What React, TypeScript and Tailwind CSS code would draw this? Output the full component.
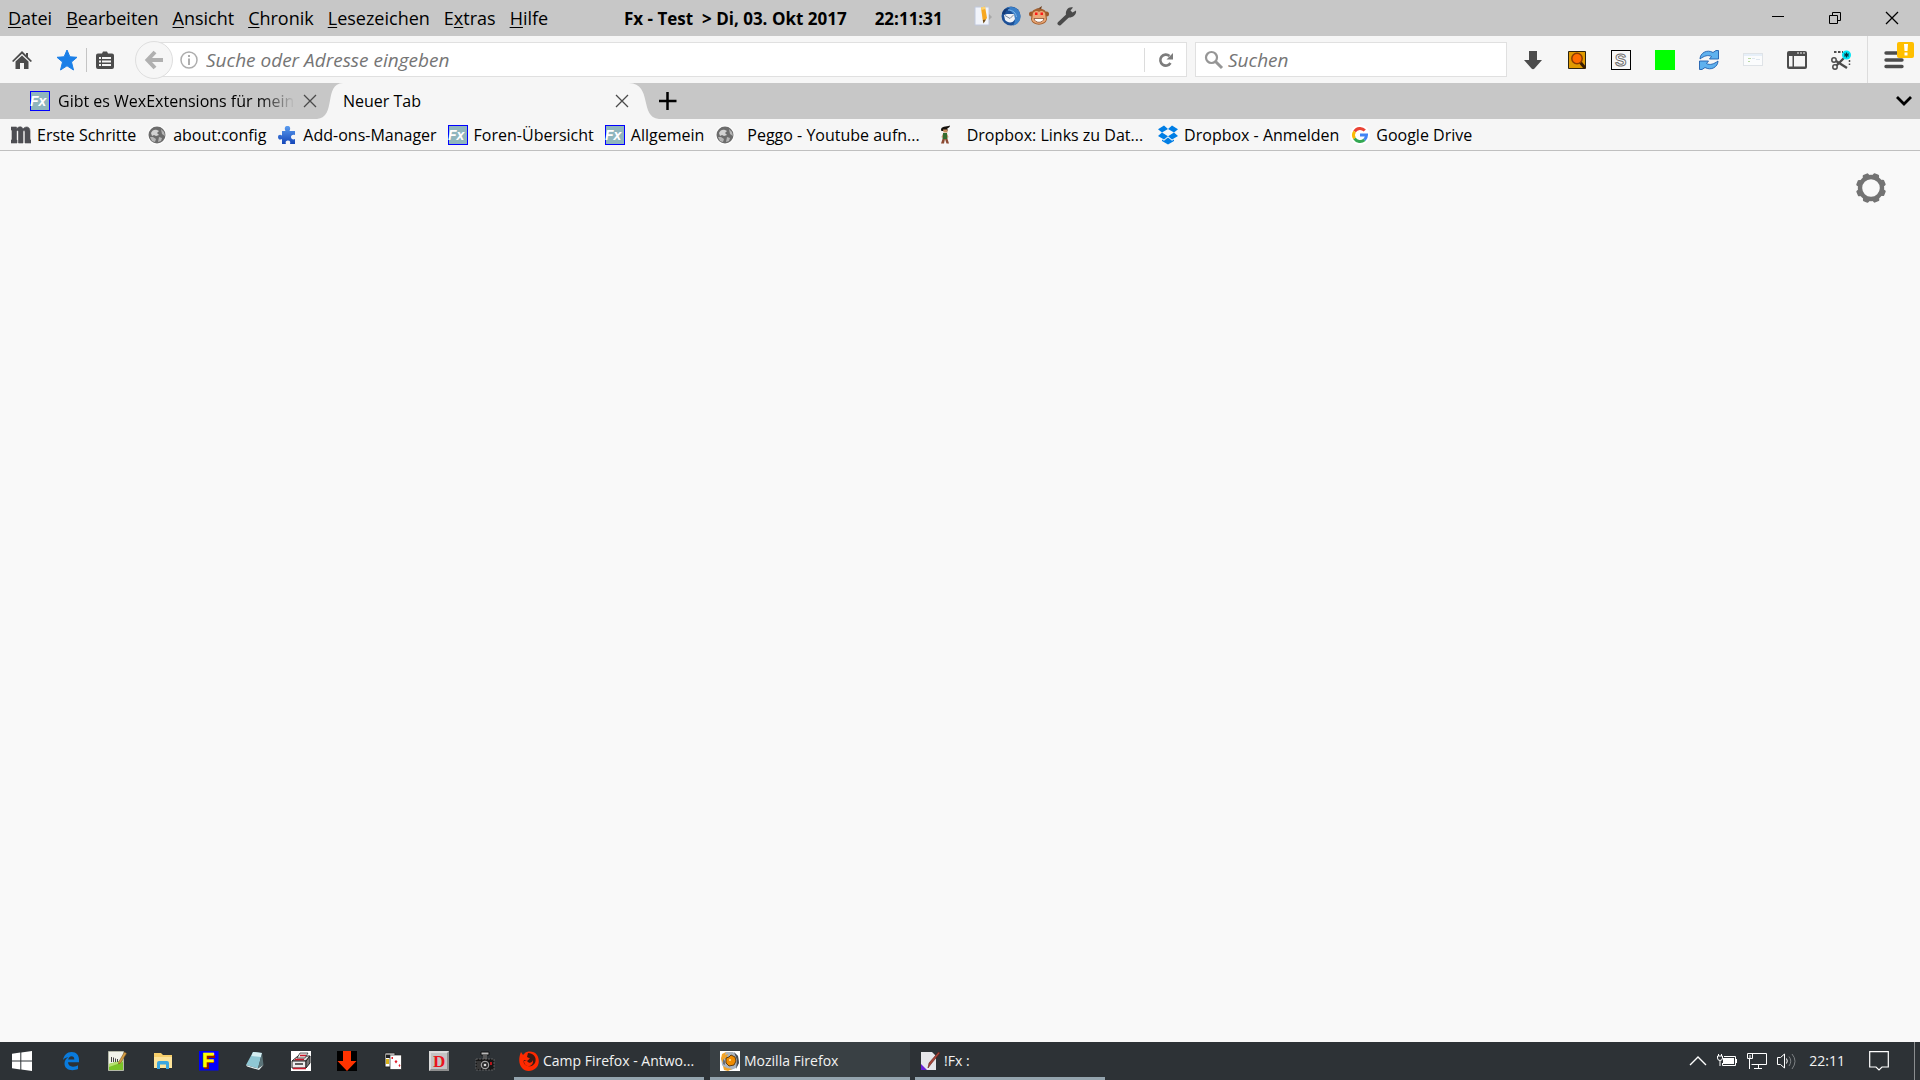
import type { ReactNode } from 'react'

type IconProps = { className?: string }

/* ---------- Icons ---------- */

function FxIcon() {
  return (
    <svg viewBox="0 0 20 20" className="w-5 h-5 shrink-0">
      <rect x="0.5" y="0.5" width="19" height="19" fill="#8fb6bd" stroke="#0000ff" />
      <text x="0" y="15" fontSize="14" fontStyle="italic" fontWeight="700" fontFamily="Liberation Sans, sans-serif" fill="#fff">
        Fx
      </text>
    </svg>
  )
}

function GlobeIcon() {
  return (
    <svg viewBox="0 0 20 20" className="w-5 h-5 shrink-0">
      <circle cx="10" cy="10" r="9.5" fill="#fff" />
      <circle cx="10" cy="10" r="8.5" fill="#6c6c6c" />
      <path d="M4 8 C5 5 8 4 10 5 L12 6 L10 8 L12 10 L9 11 L7 10 L5 11z" fill="#d2d2d2" />
      <path d="M3 12 L6 12 L9 14 L8 17 L5 16z M14 4 L17 7 L18 11 L15 9z M12 12 L15 13 L14 16 L11 17z" fill="#b5b5b5" />
    </svg>
  )
}

function MozillaIcon() {
  return (
    <svg viewBox="0 0 20 18" className="w-5 h-4.5 shrink-0">
      <path
        d="M0 1 H5.500 V3 C7.500 0 11 0 12 3 C14 0 19 0 19 5 V14 H20 V17 H14 V6 C14 4 12 4 12 6 V17 H7.500 V6 C7.500 4 5.500 4 5.500 6 V14 H6 V17 H0 V14 H1 V4 H0z"
        fill="#4d4e53"
        stroke="#4d4e53"
        strokeWidth="0.600"
      />
    </svg>
  )
}

function PuzzleIcon() {
  return (
    <svg viewBox="0 0 20 20" className="w-5 h-5 shrink-0">
      <defs>
        <linearGradient id="puzzle" x1="0" y1="0" x2="0" y2="1">
          <stop offset="0" stopColor="#5b9df0" />
          <stop offset="1" stopColor="#1546b8" />
        </linearGradient>
      </defs>
      <path
        d="M5 6 H8.500 C7 3 8 1 10.500 1 C13 1 14 3 12.500 6 H18 V10 C15 9 14 11 14 12 C14 14 16 15 18 14 V19 H13 C14 16 12 15.500 11 15.500 C9.500 15.500 8 16.500 9 19 H5 V14 C2.500 15.500 1 14 1 12 C1 10 3 9 5 10.500z"
        fill="url(#puzzle)"
      />
    </svg>
  )
}

function ElfIcon() {
  return (
    <svg viewBox="0 0 20 20" className="w-5 h-5 shrink-0">
      <path d="M6 5 C6 1 11 2 15 0.500 C15 2.500 13 3 12.500 3 V6 H6.500z" fill="#15110c" />
      <path d="M8 4.500 H12.500 V7.500 H8.500z" fill="#c98d5c" />
      <path d="M8 8 H12 L12.500 14 H7.500z" fill="#356b2e" />
      <path d="M8 9 L6.500 12 L7.500 13z M12 9 L13.500 12 L12.500 13z" fill="#b87a4a" />
      <path d="M7.500 14 L6 18.500 H9 L10 14z M10 14 L11.500 18.500 H14 L12.500 14z" fill="#8c4a32" />
    </svg>
  )
}

function DropboxIcon() {
  return (
    <svg viewBox="0 0 20 19" className="w-5 h-5 shrink-0" fill="#007ee5">
      <path d="M6 0 L10 3.500 L4 7 L0 3.800z M14 0 L10 3.500 L16 7 L20 3.800z M0 10.500 L4 7 L10 10.800 L6 14z M20 10.500 L16 7 L10 10.800 L14 14z M4 14 L6 15.200 L10 12 L14 15.200 L16 14 V15.500 L10 19 L4 15.500z" />
    </svg>
  )
}

function GoogleIcon() {
  return (
    <svg viewBox="0 0 20 20" className="w-5 h-5 shrink-0" fill="none" strokeWidth="3">
      <circle cx="10" cy="10" r="10" fill="#fff" />
      <path d="M4.600 6.500 A6.500 6.500 0 0 1 14.800 5.600" stroke="#ea4335" />
      <path d="M4.600 6.500 A6.500 6.500 0 0 0 4.500 13.500" stroke="#fbbc05" />
      <path d="M4.500 13.500 A6.500 6.500 0 0 0 14.400 14.800" stroke="#34a853" />
      <path d="M10 10 H16.500 A6.500 6.500 0 0 1 14.400 14.800" stroke="#4285f4" />
    </svg>
  )
}

function HomeIcon() {
  return (
    <svg viewBox="0 0 20 20" className="w-5 h-5" fill="#4c4c4c">
      <path d="M10 1 L14 5 V3 H16 V7 L20 11 L18.700 12 L10 3.800 L1.300 12 L0 11z" />
      <path d="M10 5.500 L16.500 11.500 V19 H12 V13 H8 V19 H3.500 V11.500z" />
    </svg>
  )
}

function StarIcon() {
  return (
    <svg viewBox="0 0 22 22" className="w-5.5 h-5.5">
      <path d="M11 1 L13.900 7.800 L21 8.300 L15.500 13 L17.500 21 L11 16.800 L4.500 21 L6.500 13 L1 8.300 L8.100 7.800z" fill="#1a7fe8" stroke="#1a7fe8" strokeLinejoin="round" />
    </svg>
  )
}

function ListIcon() {
  return (
    <svg viewBox="0 0 20 20" className="w-5 h-5">
      <path d="M3 3.500 H7 L8 1.500 H12 L13 3.500 H17 Q19 3.500 19 5.500 V17 Q19 19 17 19 H3 Q1 19 1 17 V5.500 Q1 3.500 3 3.500z" fill="#4c4c4c" />
      <path d="M4 7 H6 V9 H4z M7 7 H16 V9 H7z M4 10.500 H6 V12.500 H4z M7 10.500 H16 V12.500 H7z M4 14 H6 V16 H4z M7 14 H16 V16 H7z" fill="#f6f6f6" />
    </svg>
  )
}

function BackIcon() {
  return (
    <svg viewBox="0 0 20 20" className="w-5 h-5" fill="none" stroke="#b0b0b0" strokeWidth="4">
      <path d="M11 2 L3.500 10 L11 18 M4 10 H19" />
    </svg>
  )
}

function InfoIcon() {
  return (
    <svg viewBox="0 0 18 18" className="w-4.5 h-4.5 shrink-0">
      <circle cx="9" cy="9" r="8" fill="none" stroke="#adadad" strokeWidth="1.500" />
      <path d="M8 4 H10 V6 H8z M8 7.500 H10 V14 H8z" fill="#adadad" />
    </svg>
  )
}

function ReloadIcon() {
  return (
    <svg viewBox="0 0 16 16" className="w-4 h-4">
      <path d="M12.500 11 A5.500 5.500 0 1 1 11.500 4" fill="none" stroke="#7c7c7c" strokeWidth="2.600" />
      <path d="M8.500 7.500 H15 V1z" fill="#7c7c7c" />
    </svg>
  )
}

function LensIcon() {
  return (
    <svg viewBox="0 0 20 20" className="w-5 h-5 shrink-0" fill="none" stroke="#969696">
      <circle cx="7.500" cy="7.500" r="5.500" strokeWidth="2.200" />
      <path d="M11.500 11.500 L18 18" strokeWidth="3" />
    </svg>
  )
}

function CloseIcon({ className }: IconProps) {
  return (
    <svg viewBox="0 0 14 14" className={className} fill="none" stroke="currentColor" strokeWidth="1.300">
      <path d="M1 1 L13 13 M13 1 L1 13" />
    </svg>
  )
}

function GearIcon() {
  const teeth = [22, 67, 112, 157, 202, 247, 292, 337]
  return (
    <svg viewBox="0 0 30 30" className="w-7.5 h-7.5">
      <circle cx="15" cy="15" r="11" fill="none" stroke="#737373" strokeWidth="4.400" />
      {teeth.map((a) => (
        <path key={a} d="M11 4 L12 0.800 Q12.300 0 13 0 H17 Q17.700 0 18 0.800 L19 4z" fill="#737373" transform={`rotate(${a} 15 15)`} />
      ))}
    </svg>
  )
}

function NoteIcon() {
  return (
    <svg viewBox="0 0 20 20" className="w-5 h-5">
      <path d="M2 1 H16 V19 H2z" fill="#f1f4fb" stroke="#c0c8dc" />
      <path d="M16 8 L19 11 L16 14z" fill="#a8a8a8" />
      <path d="M8 1.500 L12 0.500 L14 12 L10.500 16.500 L9.500 13z" fill="#f7a823" />
      <path d="M8 1.500 L12 0.500 L12.400 3 L8.400 4z" fill="#fbd476" />
      <path d="M9.800 14 L10.500 17.500 L13 13.500z" fill="#6b4a1e" />
    </svg>
  )
}

function ThunderbirdIcon() {
  return (
    <svg viewBox="0 0 20 20" className="w-5 h-5">
      <circle cx="10" cy="10" r="9.500" fill="#1c4f96" />
      <path d="M5 2.500 C11 -1 19.500 2 19.500 11 C19.500 16 15 19.500 12 19.500 C16 14 14 6 5 2.500z" fill="#3a7fc8" />
      <path d="M7 4 C12 4 15 7 15.500 11" fill="none" stroke="#79b4ea" />
      <path d="M3 9 L6 8 L13 8 L14 13 C12 17.500 7 17.500 4 14z" fill="#eef2f8" />
      <path d="M4 9.500 L9 12.500 L13 8.500" fill="none" stroke="#7c8899" />
      <path d="M1 8 C2 3.500 5 1.500 9 2 C6 3.500 4.500 5 4 8z" fill="#153a74" />
    </svg>
  )
}

function MonkeyIcon() {
  return (
    <svg viewBox="0 0 20 20" className="w-5 h-5">
      <circle cx="2.500" cy="8" r="2.500" fill="#9b5a2b" />
      <circle cx="17.500" cy="8" r="2.500" fill="#9b5a2b" />
      <path d="M3 7 C3 1 17 1 17 7 L18 13 C17 20.500 3 20.500 2 13z" fill="#a5612f" />
      <path d="M7 2 H10 L13 0 L12 3z" fill="#6d3b18" />
      <path d="M4 7 C6 4.500 9 4.500 10 6 C11 4.500 14 4.500 16 7 L17 14 C14 19 6 19 3 14z" fill="#eba877" />
      <path d="M6 6.500 H8.500 V9 H6z M11.500 6.500 H14 V9 H11.500z" fill="#ff1a1a" />
      <path d="M5 12.500 H15 C14 17.500 6 17.500 5 12.500z" fill="#fff" stroke="#7a4020" strokeWidth="0.700" />
    </svg>
  )
}

function WrenchIcon() {
  return (
    <svg viewBox="0 0 20 20" className="w-5 h-5">
      <path d="M2.500 17.500 L11 9.500" stroke="#4a4a4a" strokeWidth="4" strokeLinecap="round" />
      <path d="M9 9 C8 4 12 0 16 1.500 L13.500 4.500 L15.500 6.500 L19 4.500 C20 9 15 12 11.500 11.500z" fill="#4a4a4a" />
    </svg>
  )
}

function DownloadIcon() {
  return (
    <svg viewBox="0 0 20 20" className="w-5 h-5">
      <path d="M6 1 H14 V10 H19 L11.500 18.500 Q10 20 8.500 18.500 L1 10 H6z" fill="#4c4c4c" />
    </svg>
  )
}

function OrangeLensIcon() {
  return (
    <svg viewBox="0 0 20 20" className="w-5 h-5">
      <path d="M1.500 1.500 H18.500 V18.500 H1.500z" fill="#e09a00" stroke="#2b2413" />
      <path d="M13 12 L18 18" stroke="#3a1d00" strokeWidth="3" />
      <circle cx="10" cy="8.500" r="5.200" fill="#ff6a00" stroke="#8a3c00" strokeWidth="1.500" />
    </svg>
  )
}

function StylishIcon() {
  return (
    <svg viewBox="0 0 20 20" className="w-5 h-5">
      <rect x="0.500" y="0.500" width="19" height="19" fill="#f8f8f8" stroke="#000" />
      <text x="4" y="16" fontSize="17" fontWeight="700" fontFamily="Liberation Sans, sans-serif" fill="#fff" stroke="#6f6f6f" strokeWidth="1">
        S
      </text>
    </svg>
  )
}

function SyncIcon() {
  return (
    <svg viewBox="0 0 20 20" className="w-5 h-5" stroke="#1f5fae" strokeWidth="0.900">
      <path d="M1 9 C1 3 8 -1 14 2.500 L17 0.500 H19.500 V9 H10.500 L12.500 6.500 C9 4.500 5 6 1 9z" fill="#5fb1ee" />
      <path d="M19 11 C19 17 12 21 6 17.500 L3 19.500 H0.500 V11 H9.500 L7.500 13.500 C11 15.500 15 14 19 11z" fill="#5fb1ee" />
    </svg>
  )
}

function CardIcon() {
  return (
    <svg viewBox="0 0 20 20" className="w-5 h-5">
      <rect x="0.500" y="3.500" width="19" height="12" fill="#fbfcfd" stroke="#dfe3e7" />
      <path d="M1 4 H19 V6 H1z" fill="#e6eff8" />
      <path d="M5 8 H8 V9 H5z M5 11 H7 V12 H5z" fill="#b9d9a2" />
      <path d="M9 8 H12 V9 H9z M13 9 H17 V10 H13z" fill="#dde6ef" />
    </svg>
  )
}

function SidebarIcon() {
  return (
    <svg viewBox="0 0 20 20" className="w-5 h-5">
      <rect x="0" y="1" width="20" height="18" rx="2" fill="#4c4c4c" />
      <path d="M2 6 H5.500 V16.500 H2z M7 6 H18 V16.500 H7z M10 2.500 H12 V3.500 H10z M13 2.500 H15 V3.500 H13z M16 2.500 H18 V3.500 H16z" fill="#f6f6f6" />
    </svg>
  )
}

function ScissorsIcon() {
  return (
    <svg viewBox="0 0 20 20" className="w-5 h-5" fill="none" stroke="#4c4c4c">
      <path d="M3 2 H12" strokeWidth="2" strokeDasharray="2.500 1.500" />
      <circle cx="3" cy="10" r="2.200" strokeWidth="1.500" />
      <circle cx="4" cy="17" r="2.200" strokeWidth="1.500" />
      <path d="M5 11 L16 18 M5.500 15.500 L13 8" strokeWidth="2.400" />
      <path d="M18.500 10 V15" strokeWidth="1.500" strokeDasharray="2 1.500" />
      <circle cx="15.500" cy="5" r="4.500" fill="#00e5f5" stroke="none" />
      <path d="M15.500 2.500 V7.500 M13.300 3.700 L17.700 6.300 M17.700 3.700 L13.300 6.300" strokeWidth="1.200" stroke="#0a3340" />
    </svg>
  )
}

/* ---------- Taskbar icons ---------- */

function WindowsIcon() {
  return (
    <svg viewBox="0 0 20 20" className="w-5 h-5" fill="#fff">
      <path d="M0 2.800 L8.300 1.600 V9.400 H0z M9.300 1.400 L20 0 V9.400 H9.300z M0 10.400 H8.300 V18.400 L0 17.200z M9.300 10.400 H20 V20 L9.300 18.500z" />
    </svg>
  )
}

function EdgeIcon() {
  return (
    <svg viewBox="0 0 20 20" className="w-5 h-5">
      <path
        d="M2 9 C3 4 6 1 10.500 1 C15.500 1 18 4.500 18 8.500 V11.300 H7 C7 14 9 15.700 12 15.700 C14 15.700 16 15 17 14.300 V18 C15.500 18.700 13.500 19.200 11.500 19.200 C6.500 19.200 3.500 16.500 3.500 12.500 C3.500 9.500 5 7.500 7.500 6.300 C5 6.400 3.500 7.300 2 9z M7.200 8.400 H13.300 C13.300 6.400 12.400 5.200 10.500 5.200 C8.800 5.200 7.600 6.500 7.200 8.400z"
        fill="#0a7bdc"
        fillRule="evenodd"
      />
    </svg>
  )
}

function EditorIcon() {
  return (
    <svg viewBox="0 0 20 20" className="w-5 h-5">
      <path d="M1.500 0.500 H16.500 V19.500 H1.500z" fill="#f1f3ea" stroke="#b4b9a8" />
      <path d="M2 13 L16 9 V19 H2z" fill="#7cc429" />
      <path d="M2 13 L16 9 V11 L2 16z" fill="#b5e070" />
      <path d="M4.500 11 V6 M6.500 6.500 V11 M8.500 7.500 V11 M10.500 8 V11" fill="none" stroke="#444" />
      <path d="M17.500 1 L19.500 2.500 L13.500 12 L11.500 13 L12 10.500z" fill="#d7a045" stroke="#7a5520" strokeWidth="0.600" />
    </svg>
  )
}

function FolderIcon() {
  return (
    <svg viewBox="0 0 20 20" className="w-5 h-5">
      <path d="M1 2 H8 L10 4 H19 V17 H1z" fill="#f7cf6b" />
      <path d="M1 6 H19 V17 H1z" fill="#fde49a" />
      <path d="M4 18 V12 Q4 10 6 10 H14 Q16 10 16 12 V18 H13 V13.500 H7 V18z" fill="#3ba7e0" />
    </svg>
  )
}

function LetterFIcon() {
  return (
    <svg viewBox="0 0 20 20" className="w-5 h-5">
      <rect width="19.500" height="19.500" fill="#0000ff" />
      <path d="M5 4 H16 V7 H10 V9 H15 V12 H10 V18 H5z" fill="#8b1a00" />
      <text x="3" y="16" fontSize="20" fontWeight="900" fontFamily="Liberation Sans, sans-serif" fill="#ffff00" stroke="#ffff00" strokeWidth="0.600">
        F
      </text>
    </svg>
  )
}

function NotebookIcon() {
  return (
    <svg viewBox="0 0 20 20" className="w-5 h-5">
      <path d="M8 1 L17 2 L13 17.500 L1 14z" fill="#8fc7d4" />
      <path d="M8 1 L17 2 L16 6 L6.500 5z" fill="#d6eef2" />
      <path d="M17 2 L18.500 14 L13 17.500z" fill="#5b7479" />
      <path d="M1 14 L13 17.500 L18.500 14 L14 19 L2 15.500z" fill="#e6f1f2" />
    </svg>
  )
}

function PrinterIcon() {
  return (
    <svg viewBox="0 0 20 20" className="w-5 h-5">
      <rect width="20" height="20" fill="#fff" />
      <path d="M1 10 L7 5 H19 L15 10z" fill="#d9d9d9" stroke="#222" />
      <path d="M1 10 H15 V17 H1z" fill="#ececec" stroke="#222" />
      <path d="M15 10 L19 5 V12 L15 17z" fill="#777" stroke="#222" />
      <path d="M6 7 L9 2 H17 L14 7z" fill="#e8e8e8" stroke="#222" strokeWidth="0.700" />
      <path d="M9 4.500 H15 M4 8.500 H13" stroke="#c8192a" strokeWidth="1.600" />
      <path d="M2 17.500 H15" stroke="#c8192a" strokeWidth="1.600" />
      <path d="M4 13 H12" stroke="#222" strokeWidth="1.400" />
    </svg>
  )
}

function RedArrowIcon() {
  return (
    <svg viewBox="0 0 20 20" className="w-5 h-5">
      <rect width="20" height="20" fill="#000" />
      <path d="M6 0 H14 V10 H19.500 L10 20 L0.500 10 H6z" fill="#ff3300" />
    </svg>
  )
}

function CardsIcon() {
  return (
    <svg viewBox="0 0 20 20" className="w-5 h-5">
      <path d="M2 2 H12 V16 H2z" fill="#fff" stroke="#222" />
      <path d="M3 3.500 H7 V7 H3z" fill="#222" />
      <path d="M3 8 H6 V13 H3z" fill="#d7b21d" />
      <path d="M7 4 H18.500 V18.500 H7z" fill="#fff" stroke="#222" strokeWidth="0.700" />
      <path d="M8.500 6 H10 V8 H8.500z M11.500 10.500 L13 9 L14.500 10.500 L13 12.500z M15.500 14.500 L16.500 13 L17.500 14.500 L16.500 16z" fill="#e3202c" />
    </svg>
  )
}

function LetterDIcon() {
  return (
    <svg viewBox="0 0 20 20" className="w-5 h-5">
      <rect width="20" height="20" fill="#8f8f8f" />
      <path d="M0 0 H20 L18 2 H2 V18 L0 20z" fill="#dcdcdc" />
      <rect x="2" y="2" width="16" height="16" fill="#c4c4c4" />
      <text x="4" y="16" fontSize="17" fontWeight="700" fontFamily="Liberation Serif, serif" fill="#e8141c">
        D
      </text>
    </svg>
  )
}

function CameraIcon() {
  return (
    <svg viewBox="0 0 20 20" className="w-5 h-5">
      <path d="M6 1 H14 V4 H6z" fill="#b9b9b9" stroke="#111" />
      <path d="M8 4 H12 V8 H8z" fill="#555" />
      <path d="M1 8 H19 V19 H1z" fill="#161616" stroke="#777" strokeWidth="0.700" strokeDasharray="2 1" />
      <path d="M3 10 V18 M5 10 V18" stroke="#6a6a6a" strokeWidth="0.800" />
      <circle cx="10" cy="14" r="3.800" fill="#2c2c2c" stroke="#b9b9b9" />
      <circle cx="10" cy="14" r="1.300" fill="#ddd" />
      <path d="M15 11 H17 V14 H15z" fill="#b3161c" />
    </svg>
  )
}

function RedFoxIcon() {
  return (
    <svg viewBox="0 0 20 20" className="w-5 h-5 shrink-0">
      <path
        d="M6 2 C8 0 15 -0.500 18 4 C21 9 20 14 17 17 C13 21 6 21 3 17 C-0.500 13 -0.500 7 2 1 L4 4z"
        fill="#ff2a00"
      />
      <path d="M9 2 C14 2 17.500 6 16.500 10 C16 14 12 16 9 15 C5 14 4 11 5 9 L8 10 L11 7.500 L8 6z" fill="#3a1a14" />
      <path d="M8 10 C10 13 13 12 14 9 C14.500 13 12 15 9.500 15 C7 15 5 13 5 10z" fill="#ff2a00" />
    </svg>
  )
}

function BetaFoxIcon() {
  return (
    <svg viewBox="0 0 20 20" className="w-5 h-5 shrink-0">
      <rect width="20" height="20" fill="#fff" />
      <path d="M6 1 H13 L18 5 L19 11 L16 17 L11 19 H6 L2 14 L1 7z" fill="#aab4bf" />
      <path d="M1 8 L2 3 L6 1 L5 4 L8 3 L7 6 L4 8 L3 12z M3 15 L7 17 L12 18 L8 20 L4 19z" fill="#f1a42a" />
      <path d="M14 1 L18 5 L19 12 L16 18 L17 9z" fill="#4a4f56" />
      <path d="M6 7 L9 6 L11 4 L15 6 L16 10 L14 14 L9 15 L6 12z" fill="#f08c00" stroke="#553208" strokeWidth="0.900" />
      <path d="M3 8 L5 10 L5 14 L3 13z" fill="#6b7078" />
      <path d="M9 8 H11 V10 H9z" fill="#fbd27a" />
    </svg>
  )
}

function PenPageIcon() {
  return (
    <svg viewBox="0 0 20 20" className="w-5 h-5 shrink-0">
      <path d="M1 1 H12 L16 5 V19 H1z" fill="#e6e6ea" />
      <path d="M1 13 L7 19 H1z" fill="#6a22d8" />
      <path d="M18.500 1 L20 2 L11 13 L8 17 L9 12z" fill="#a8453a" stroke="#5e1f18" strokeWidth="0.600" />
    </svg>
  )
}

/* ---------- Data ---------- */

const menus = [
  { before: '', key: 'D', after: 'atei' },
  { before: '', key: 'B', after: 'earbeiten' },
  { before: '', key: 'A', after: 'nsicht' },
  { before: '', key: 'C', after: 'hronik' },
  { before: '', key: 'L', after: 'esezeichen' },
  { before: 'E', key: 'x', after: 'tras' },
  { before: '', key: 'H', after: 'ilfe' },
]

const bookmarks: { label: string; icon: ReactNode; wide?: boolean }[] = [
  { label: 'Erste Schritte', icon: <MozillaIcon /> },
  { label: 'about:config', icon: <GlobeIcon /> },
  { label: 'Add-ons-Manager', icon: <PuzzleIcon /> },
  { label: 'Foren-Übersicht', icon: <FxIcon /> },
  { label: 'Allgemein', icon: <FxIcon /> },
  { label: 'Peggo - Youtube aufn...', icon: <GlobeIcon />, wide: true },
  { label: 'Dropbox: Links zu Dat...', icon: <ElfIcon />, wide: true },
  { label: 'Dropbox - Anmelden', icon: <DropboxIcon /> },
  { label: 'Google Drive', icon: <GoogleIcon /> },
]

const tools = [
  { name: 'Downloads', icon: <DownloadIcon /> },
  { name: 'Bildersuche', icon: <OrangeLensIcon /> },
  { name: 'Stylish', icon: <StylishIcon /> },
  { name: 'Status', icon: <span className="block w-5 h-5 bg-[#00ff00]" /> },
  { name: 'Neu laden', icon: <SyncIcon /> },
  { name: 'Vorschau', icon: <CardIcon /> },
  { name: 'Seitenleiste', icon: <SidebarIcon /> },
  { name: 'Ausschneiden', icon: <ScissorsIcon /> },
]

const launchers = [
  { name: 'Start', icon: <WindowsIcon /> },
  { name: 'Edge', icon: <EdgeIcon /> },
  { name: 'Editor', icon: <EditorIcon /> },
  { name: 'Explorer', icon: <FolderIcon /> },
  { name: 'FreeCommander', icon: <LetterFIcon /> },
  { name: 'Notizblock', icon: <NotebookIcon /> },
  { name: 'Drucker', icon: <PrinterIcon /> },
  { name: 'Download', icon: <RedArrowIcon /> },
  { name: 'Solitaire', icon: <CardsIcon /> },
  { name: 'Wörterbuch', icon: <LetterDIcon /> },
  { name: 'Kamera', icon: <CameraIcon /> },
]

/* ---------- Sections ---------- */

function TitleBar() {
  return (
    <div className="flex items-center h-9 bg-[#c7c7c7]">
      <nav className="flex w-[624px] shrink-0 gap-[14px] pl-2 text-lg leading-6">
        {menus.map((m) => (
          <button key={m.key}>
            {m.before}
            <span className="underline underline-offset-2 decoration-1">{m.key}</span>
            {m.after}
          </button>
        ))}
      </nav>
      <div className="flex gap-7 pt-0.5 text-[17px] leading-6 font-bold">
        <span className="whitespace-pre">{'Fx - Test  > Di, 03. Okt 2017'}</span>
        <span>22:11:31</span>
      </div>
      <div className="flex gap-2 ml-[30px] pb-1">
        <button aria-label="Notiz"><NoteIcon /></button>
        <button aria-label="Thunderbird"><ThunderbirdIcon /></button>
        <button aria-label="Greasemonkey"><MonkeyIcon /></button>
        <button aria-label="Werkzeuge"><WrenchIcon /></button>
      </div>
      <div className="flex ml-auto">
        <button aria-label="Minimieren" className="flex justify-center w-[57px]">
          <svg viewBox="0 0 14 14" className="w-3.5 h-3.5">
            <path d="M1 5.500 H13" stroke="#000" />
          </svg>
        </button>
        <button aria-label="Verkleinern" className="flex justify-center w-[57px]">
          <svg viewBox="0 0 14 14" className="w-3.5 h-3.5" fill="none" stroke="#000">
            <path d="M1.500 4.500 H9.500 V12.500 H1.500z M4.500 4.500 V1.500 H12.500 V9.500 H9.500" />
          </svg>
        </button>
        <button aria-label="Schließen" className="flex justify-center w-[57px]">
          <CloseIcon className="w-3.5 h-3.5" />
        </button>
      </div>
    </div>
  )
}

function NavBar() {
  return (
    <div className="flex items-center h-[47px] bg-[#f6f6f6]">
      <div className="flex items-center pl-3">
        <button aria-label="Startseite"><HomeIcon /></button>
        <button aria-label="Lesezeichen" className="ml-6"><StarIcon /></button>
        <span className="w-px h-6 mx-2 bg-[#c4c4c4]" />
        <button aria-label="Lesezeichen anzeigen"><ListIcon /></button>
      </div>

      {/* Address bar */}
      <div className="flex items-center flex-1 ml-5">
        <button
          aria-label="Zurück"
          className="z-10 flex items-center justify-center w-[38px] h-[38px] -mr-3.5 rounded-full border border-[#dedede] bg-[#f6f6f6]"
        >
          <BackIcon />
        </button>
        <div className="flex items-center flex-1 h-[35px] pl-5 bg-white border border-[#e0e0e0]">
          <InfoIcon />
          <input
            type="text"
            aria-label="Adresse"
            placeholder="Suche oder Adresse eingeben"
            className="flex-1 ml-2 text-[19px] leading-6 italic placeholder:text-[#757575] outline-none"
          />
          <button aria-label="Neu laden" className="flex items-center justify-center w-[42px] h-6 border-l border-[#dcdcdc]">
            <ReloadIcon />
          </button>
        </div>
      </div>

      {/* Search */}
      <div className="flex items-center w-[312px] h-[35px] ml-2 pl-2 bg-white border border-[#e0e0e0]">
        <LensIcon />
        <input
          type="text"
          aria-label="Suchen"
          placeholder="Suchen"
          className="w-full ml-1 text-[19px] leading-6 italic placeholder:text-[#757575] outline-none"
        />
      </div>

      <div className="flex gap-6 ml-4">
        {tools.map((t) => (
          <button key={t.name} aria-label={t.name}>{t.icon}</button>
        ))}
      </div>

      <div className="relative flex items-center h-full ml-4 px-4 border-l border-[#dcdcdc]">
        <button aria-label="Menü">
          <svg viewBox="0 0 20 20" className="w-5 h-5" stroke="#4c4c4c" strokeWidth="3.400" strokeLinecap="round">
            <path d="M2 3 H18 M2 10 H18 M2 16.500 H18" />
          </svg>
        </button>
        <span className="absolute top-1.5 right-1.5 flex items-center justify-center w-[17px] h-4 rounded-xs bg-[#ffbf00]">
          <svg viewBox="0 0 4 12" className="w-1 h-3" fill="#fff">
            <path d="M0 0 H4 L3.500 7 H0.500z M0.500 8.500 H3.500 V11.500 H0.500z" />
          </svg>
        </span>
      </div>
    </div>
  )
}

function TabBar() {
  return (
    <div className="flex items-center h-9 bg-[#c7c7c7] text-base">
      <div className="flex items-center w-[317px] pl-[30px]">
        <FxIcon />
        <span className="flex-1 ml-2 overflow-hidden whitespace-nowrap mask-r-from-85%">
          Gibt es WexExtensions für mein
        </span>
        <button aria-label="Tab schließen" className="ml-2 text-[#4a4a4a]">
          <CloseIcon className="w-3.5 h-3.5" />
        </button>
      </div>

      {/* Active tab */}
      <div className="flex h-full">
        <svg viewBox="0 0 26 36" className="w-[26px] h-9 shrink-0">
          <path d="M0 36 C20 34 6 1 26 0 V36z" fill="#f6f6f6" />
        </svg>
        <div className="flex items-center justify-between w-[286px] bg-[#f6f6f6]">
          <span>Neuer Tab</span>
          <button aria-label="Tab schließen" className="text-[#4a4a4a]">
            <CloseIcon className="w-3.5 h-3.5" />
          </button>
        </div>
        <svg viewBox="0 0 30 36" className="w-[30px] h-9 shrink-0">
          <path d="M30 36 C10 34 24 1 0 0 V36z" fill="#f6f6f6" />
        </svg>
      </div>
      <button aria-label="Neuer Tab">
        <svg viewBox="0 0 18 18" className="w-4.5 h-4.5" stroke="#000" strokeWidth="2.500">
          <path d="M8.500 0 V18 M0 9 H17.500" />
        </svg>
      </button>
      <button aria-label="Alle Tabs" className="ml-auto mr-2">
        <svg viewBox="0 0 16 10" className="w-4 h-2.5" fill="none" stroke="#000" strokeWidth="2.800">
          <path d="M1 1 L8 8 L15 1" />
        </svg>
      </button>
    </div>
  )
}

function BookmarkBar() {
  return (
    <div className="flex items-center h-8 gap-[11px] pl-[11px] pt-px bg-[#f6f6f6] border-b border-[#c0c0c0] text-base">
      {bookmarks.map((b) => (
        <a key={b.label} href="#" className={b.wide ? 'flex items-center gap-3 pr-1' : 'flex items-center gap-1.5'}>
          {b.icon}
          <span className="whitespace-nowrap">{b.label}</span>
        </a>
      ))}
    </div>
  )
}

function Taskbar() {
  return (
    <footer className="flex h-[38px] bg-[#2d3236] text-sm text-[#f2f2f2]">
      <div className="flex items-center gap-[26px] pl-3 w-[514px] shrink-0">
        {launchers.map((l) => (
          <button key={l.name} aria-label={l.name} className="first:mr-[3px]">{l.icon}</button>
        ))}
      </div>
      <button className="flex items-center gap-1 w-[190px] pt-[3px] pl-[5px] border-b-3 border-[#94a4ae]">
        <RedFoxIcon />
        <span className="whitespace-nowrap">Camp Firefox - Antwo...</span>
      </button>
      <button className="flex items-center gap-1 w-[200px] ml-1.5 pt-[3px] pl-[10px] border-b-3 border-[#94a4ae] bg-[#394044]">
        <BetaFoxIcon />
        <span>Mozilla Firefox</span>
      </button>
      <button className="flex items-center gap-1 w-[190px] ml-[5px] pt-[3px] pl-[5px] border-b-3 border-[#94a4ae]">
        <PenPageIcon />
        <span>!Fx :</span>
      </button>

      {/* Tray */}
      <div className="flex items-center gap-[10px] ml-auto">
        <button aria-label="Ausgeblendete Symbole">
          <svg viewBox="0 0 18 10" className="w-4.5 h-2.5" fill="none" stroke="#fff" strokeWidth="1.400">
            <path d="M1 9 L9 1 L17 9" />
          </svg>
        </button>
        <button aria-label="Akku">
          <svg viewBox="0 0 20 20" className="w-5 h-5">
            <path d="M7 5.500 H18.500 V14.500 H5.500 V12" fill="none" stroke="#fff" />
            <path d="M6 7 H17 V13 H6z M19 8 H20 V12 H19z" fill="#fff" />
            <path d="M1.500 3 V5 M4.500 3 V5 M3 9 V15" stroke="#fff" />
            <path d="M0.500 5 H5.500 V7 Q5.500 9.500 3 9.500 Q0.500 9.500 0.500 7z" fill="#2d3236" stroke="#fff" />
          </svg>
        </button>
        <button aria-label="Netzwerk">
          <svg viewBox="0 0 20 20" className="w-5 h-5" fill="none" stroke="#fff">
            <path d="M5 2.500 H19.500 V13.500 H4.500 M11.500 14 V17 M7 17.500 H15" />
            <path d="M0.500 2.500 H5.500 V7.500 H0.500z M3 4 V7 M2.500 8 V18" />
          </svg>
        </button>
        <button aria-label="Lautstärke">
          <svg viewBox="0 0 20 20" className="w-5 h-5" fill="none" stroke="#fff">
            <path d="M0.500 6.500 H3.500 L7.500 3 V17 L3.500 13.500 H0.500z M9.500 7.500 Q11 10 9.500 12.500" />
            <path d="M12 5.500 Q15.500 10 12 15 M15 3 Q21 10 15 18" stroke="#7d8184" />
          </svg>
        </button>
        <time className="ml-0.5">22:11</time>
        <button aria-label="Info-Center" className="ml-3.5">
          <svg viewBox="0 0 20 20" className="w-5 h-5" fill="none" stroke="#fff" strokeWidth="1.200">
            <path d="M0.700 0.700 H19.300 V16 H13 L10 19 L7 16 H0.700z" />
          </svg>
        </button>
        <span className="h-[38px] ml-[15px] w-1.5 border-l border-[#8a8d8f]" />
      </div>
    </footer>
  )
}

export default function App() {
  return (
    <div className="flex flex-col min-h-screen bg-[#f9f9f9] font-['Open_Sans',sans-serif] text-black">
      <TitleBar />
      <NavBar />
      <TabBar />
      <BookmarkBar />
      <main className="flex flex-1 items-start justify-end pt-[22px] pr-[34px]">
        <button aria-label="Einstellungen"><GearIcon /></button>
      </main>
      <Taskbar />
    </div>
  )
}
